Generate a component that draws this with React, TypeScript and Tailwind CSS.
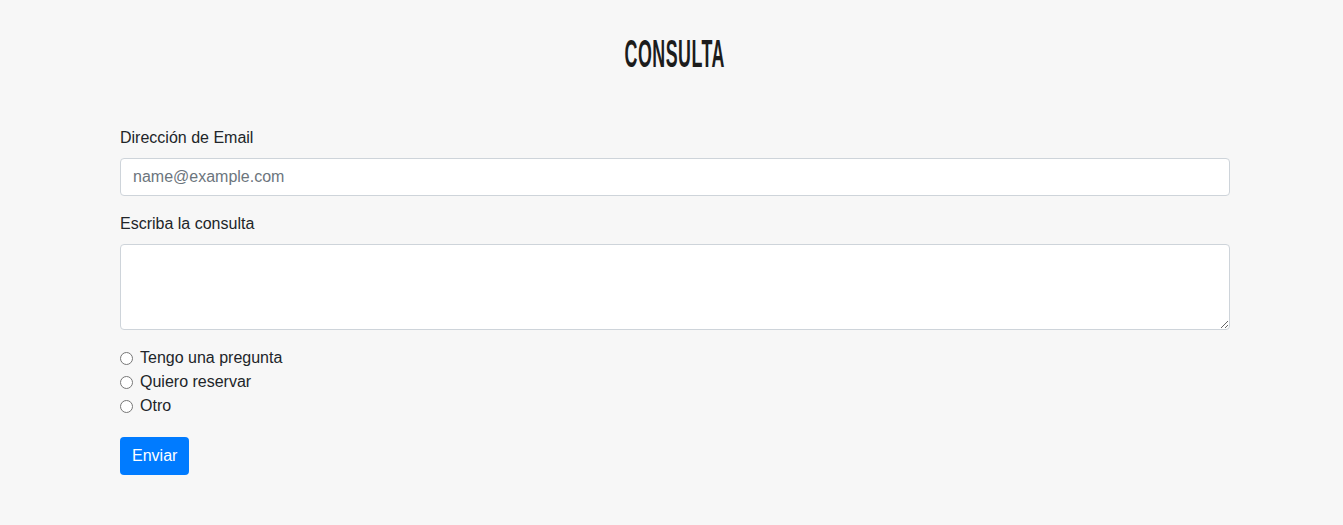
import React from "react";

const options = ["Tengo una pregunta", "Quiero reservar", "Otro"];

export default function App() {
  return (
    <div className="min-h-[525px] bg-[#f7f7f7] font-['Liberation_Sans',Arial,sans-serif] text-[#212529]">
      <div className="ml-[120px] w-[1110px] pt-[30px]">
        {/* Title */}
        <h2 className="flex h-[48px] items-center justify-center">
          <span className="inline-block origin-center scale-x-[0.47] text-[38px] font-bold uppercase leading-[48px] tracking-[1px] text-[#1c1c1c]">
            Consulta
          </span>
        </h2>

        <form className="mt-[48px]" onSubmit={(e) => e.preventDefault()}>
          <div className="mb-4">
            <label htmlFor="email" className="mb-2 block text-base leading-6">
              Dirección de Email
            </label>
            <input
              id="email"
              type="email"
              placeholder="name@example.com"
              className="block h-[38px] w-full rounded-[4px] border border-[#ced4da] bg-white px-3 text-base text-[#495057] outline-none placeholder:text-[#6c757d]"
            />
          </div>

          <div className="mb-4">
            <label htmlFor="consulta" className="mb-2 block text-base leading-6">
              Escriba la consulta
            </label>
            <textarea
              id="consulta"
              className="block h-[86px] w-full rounded-[4px] border border-[#ced4da] bg-white px-3 py-1.5 text-base outline-none"
            />
          </div>

          <div className="flex flex-col">
            {options.map((opt) => (
              <label key={opt} className="flex h-6 items-center text-base leading-6">
                <input type="radio" name="tipo" className="m-0 mr-[7px] h-[13px] w-[13px]" />
                {opt}
              </label>
            ))}
          </div>

          <button
            type="submit"
            className="mt-[19px] h-[38px] rounded-[4px] bg-[#007bff] px-3 text-base text-white"
          >
            Enviar
          </button>
        </form>
      </div>
    </div>
  );
}
